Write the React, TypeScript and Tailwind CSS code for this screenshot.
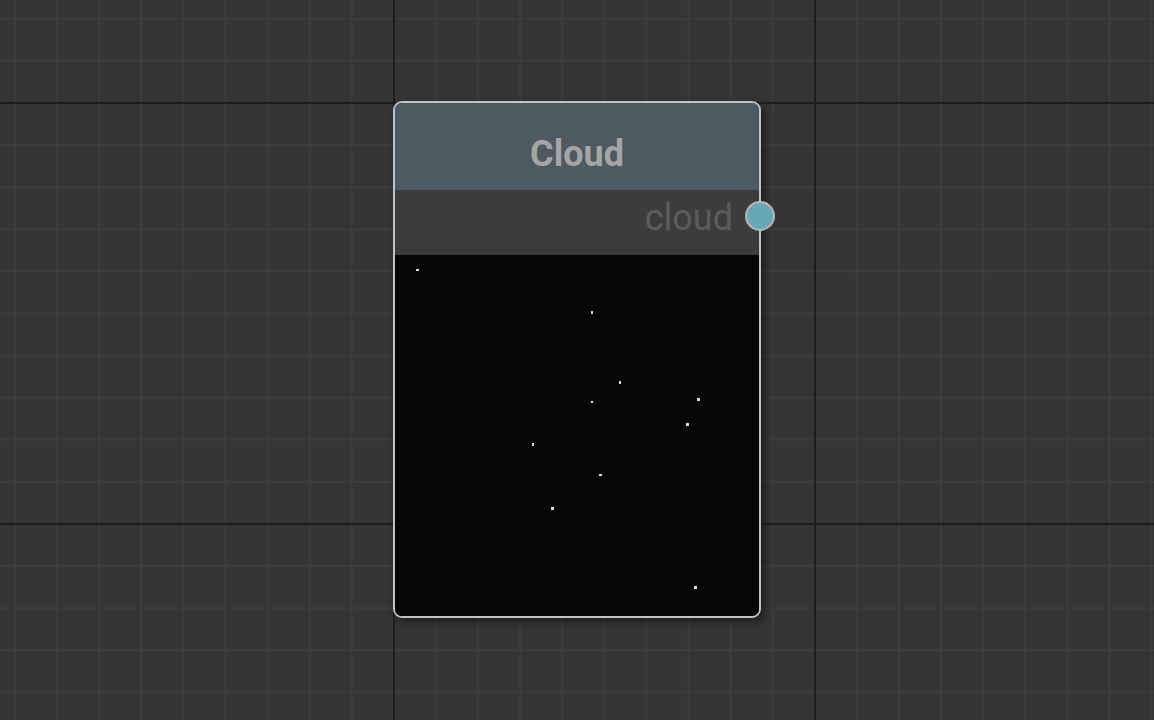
const stars = [
  { x: 416, y: 269, w: 3, h: 2 },
  { x: 591, y: 311, w: 2, h: 3 },
  { x: 619, y: 381, w: 2, h: 3 },
  { x: 591, y: 401, w: 2, h: 2 },
  { x: 697, y: 398, w: 3, h: 3 },
  { x: 686, y: 423, w: 3, h: 3 },
  { x: 532, y: 443, w: 2, h: 3 },
  { x: 599, y: 474, w: 3, h: 2 },
  { x: 551, y: 507, w: 3, h: 3 },
  { x: 694, y: 586, w: 3, h: 3 },
];

// preview area's top-left corner on the page
const PREVIEW_X = 395;
const PREVIEW_Y = 255;

export default function App() {
  return (
    <div
      className="relative h-[720px] w-[1154px] overflow-hidden bg-[#353535] font-['Roboto',sans-serif]
        bg-[linear-gradient(to_right,#1e1e1e_2px,transparent_2px),linear-gradient(to_bottom,#1e1e1e_2px,transparent_2px),linear-gradient(to_right,#3c3c3c_2px,transparent_2px),linear-gradient(to_bottom,#3c3c3c_2px,transparent_2px)]
        bg-[length:421px_421px,421px_421px,42.1px_42.1px,42.1px_42.1px]
        bg-[position:393px_102px,393px_102px,14px_17.8px,14px_17.8px]"
    >
      {/* node */}
      <div className="absolute left-[393px] top-[101px] flex h-[517px] w-[368px] flex-col rounded-[9px] border-2 border-[#c2c2c2] shadow-[4px_4px_8px_rgba(0,0,0,0.45)]">
        <div className="flex h-[87px] items-center justify-center rounded-t-[7px] bg-[#4e5a61] pt-[14px]">
          <span className="text-[36px] font-bold text-[#a6a6a6]">Cloud</span>
        </div>

        <div className="relative flex h-[65px] items-center justify-end bg-[#3c3c3c] pb-[10px] pr-[26px]">
          <span className="text-[36px] text-[#5c5c5c]">cloud</span>
          <span className="absolute right-[-16px] top-[11px] h-[30px] w-[30px] rounded-full border-2 border-[#b8b8b8] bg-[#66a8b7]" />
        </div>

        <div className="relative flex-1 rounded-b-[7px] bg-[#060606]">
          {stars.map((s, i) => (
            <span
              key={i}
              className="absolute bg-[#dcdcdc]"
              style={{ left: s.x - PREVIEW_X, top: s.y - PREVIEW_Y, width: s.w, height: s.h }}
            />
          ))}
        </div>
      </div>
    </div>
  );
}
